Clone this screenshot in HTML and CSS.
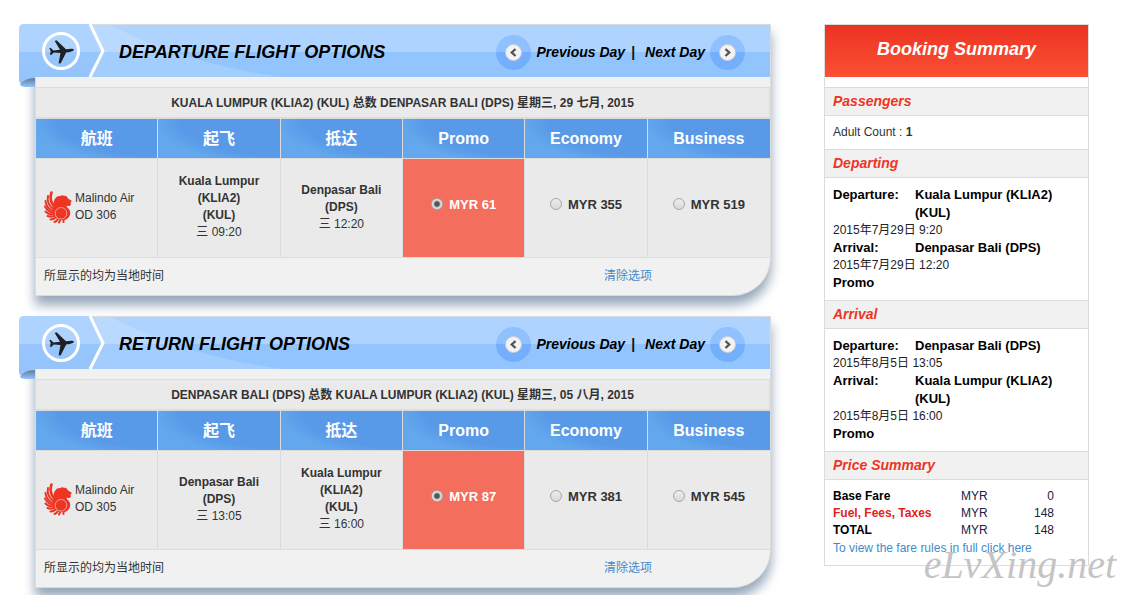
FILE: index.html
```
<!doctype html>
<html lang="zh-CN">
  <head>
    <meta charset="UTF-8" />
    <title>Flight Options</title>
    <link rel="stylesheet" href="styles.css">
  </head>
  <body>
    <!-- shared icons -->
    <svg class="sprite" width="0" height="0" aria-hidden="true">
      <defs>
        <linearGradient id="tab-fill" x1="0" y1="0" x2="0" y2="1">
          <stop offset="0" stop-color="#aed3ff" />
          <stop offset=".44" stop-color="#aed3ff" />
          <stop offset=".44" stop-color="#97c6fd" />
          <stop offset="1" stop-color="#94c4fb" />
        </linearGradient>
        <linearGradient id="fold-fill" x1="0" y1="0" x2="0" y2="1">
          <stop offset="0" stop-color="#5f7a99" />
          <stop offset="1" stop-color="#94c4fb" />
        </linearGradient>
      </defs>
      <symbol id="ribbon" viewBox="0 0 280 63">
        <path d="M72 1H92Q160 38 262 53H72Z" fill="#fff" fill-opacity=".15" />
        <path d="M5 0H71L84 27L71 53H16V63H8Q0 61 0 56V5Q0 0 5 0Z" fill="url(#tab-fill)" />
        <path d="M1 61Q5 54 16 54V63H8Q3 63 1 61Z" fill="url(#fold-fill)" />
        <path d="M71 0L84 27L71 53" fill="none" stroke="#fff" stroke-width="3" />
        <circle cx="42" cy="27" r="17.500" fill="none" stroke="#fff" stroke-width="3" />
        <path d="M55 25.500C54 24.200 50 25 47 25.200L37.500 16.200L35.700 17L41 25.800L34.500 26.600L31.500 23.800L30.400 24.300L31.700 27.300L31 30.700L32.200 30.900L34.800 28.500L41.500 29L39.600 39.300L41.600 39.600L47.200 28.600C50 28 55 27.500 55 25.500Z" fill="#202024" />
      </symbol>
      <symbol id="malindo" viewBox="0 0 28 33">
        <g fill="none" stroke="#ee3524" stroke-width="2" stroke-linecap="round">
          <path d="M7.500 1.500Q4.500 10 11.500 17" stroke-width="2.600" />
          <path d="M4 5Q2 13 10.500 19" />
          <path d="M1.500 10Q2 17 10 20.500" />
          <path d="M1 15.500Q4 21 10 22" />
          <path d="M1.500 20.500Q5 24 10 23.500" />
          <path d="M3.500 25Q7 26.500 10.500 25" />
          <path d="M6.500 28.500Q9.500 28.500 12 26.500" />
          <path d="M10.500 31Q13 30 14 28" />
          <path d="M15 31.500L16.500 28.500" />
          <path d="M19.500 31L19.500 28.500" />
        </g>
        <path d="M10.500 8.500Q13 4.500 16 5.200Q18 3.600 20 4.800Q23 4 24 7.500L28 10L26.500 11.500L27 13.500Q25.500 16 22.500 14.500Q22.500 16.500 25 18Q27.500 22 25 26Q21 31 14.500 28.500Q9 25 10 18.500Q8.500 13 10.500 8.500Z" fill="#ee3524" />
        <circle cx="17" cy="22.300" r="5.800" fill="none" stroke="#ebebeb" stroke-opacity=".7" stroke-width=".8" />
      </symbol>
      <symbol id="arrow" viewBox="0 0 35 35">
        <circle cx="17.500" cy="17.500" r="8" fill="#f2f3f5" stroke="#c9ccd2" />
        <path d="M19.500 14L15.800 17.500L19.500 21" fill="none" stroke="#555" stroke-width="2.400" />
      </symbol>
    </svg>

    <div class="page">
      <main class="flights">
        <section class="panel">
          <header class="panel-header">
            <svg class="ribbon" aria-hidden="true"><use href="#ribbon" /></svg>
            <h2>DEPARTURE FLIGHT OPTIONS</h2>
            <nav class="day-nav">
              <a href="#"><svg class="arrow"><use href="#arrow" /></svg>Previous Day</a>
              <span class="divider">|</span>
              <a href="#">Next Day<svg class="arrow arrow-next"><use href="#arrow" /></svg></a>
            </nav>
          </header>
          <table class="options">
            <caption>KUALA LUMPUR (KLIA2) (KUL) 总数 DENPASAR BALI (DPS) 星期三, 29 七月, 2015</caption>
            <thead>
              <tr>
                <th>航班</th>
                <th>起飞</th>
                <th>抵达</th>
                <th>Promo</th>
                <th>Economy</th>
                <th>Business</th>
              </tr>
            </thead>
            <tbody>
              <tr>
                <td>
                  <div class="airline">
                    <svg class="logo" aria-hidden="true"><use href="#malindo" /></svg>
                    <span>Malindo Air<br>OD 306</span>
                  </div>
                </td>
                <td><b>Kuala Lumpur<br>(KLIA2)<br>(KUL)</b><br>三 09:20</td>
                <td><b>Denpasar Bali<br>(DPS)</b><br>三 12:20</td>
                <td class="selected"><label class="fare"><input type="radio" name="depart" checked>MYR 61</label></td>
                <td><label class="fare"><input type="radio" name="depart">MYR 355</label></td>
                <td><label class="fare"><input type="radio" name="depart">MYR 519</label></td>
              </tr>
            </tbody>
          </table>
          <footer class="panel-footer">
            <span>所显示的均为当地时间</span>
            <a href="#">清除选项</a>
          </footer>
        </section>

        <section class="panel">
          <header class="panel-header">
            <svg class="ribbon" aria-hidden="true"><use href="#ribbon" /></svg>
            <h2>RETURN FLIGHT OPTIONS</h2>
            <nav class="day-nav">
              <a href="#"><svg class="arrow"><use href="#arrow" /></svg>Previous Day</a>
              <span class="divider">|</span>
              <a href="#">Next Day<svg class="arrow arrow-next"><use href="#arrow" /></svg></a>
            </nav>
          </header>
          <table class="options">
            <caption>DENPASAR BALI (DPS) 总数 KUALA LUMPUR (KLIA2) (KUL) 星期三, 05 八月, 2015</caption>
            <thead>
              <tr>
                <th>航班</th>
                <th>起飞</th>
                <th>抵达</th>
                <th>Promo</th>
                <th>Economy</th>
                <th>Business</th>
              </tr>
            </thead>
            <tbody>
              <tr>
                <td>
                  <div class="airline">
                    <svg class="logo" aria-hidden="true"><use href="#malindo" /></svg>
                    <span>Malindo Air<br>OD 305</span>
                  </div>
                </td>
                <td><b>Denpasar Bali<br>(DPS)</b><br>三 13:05</td>
                <td><b>Kuala Lumpur<br>(KLIA2)<br>(KUL)</b><br>三 16:00</td>
                <td class="selected"><label class="fare"><input type="radio" name="return" checked>MYR 87</label></td>
                <td><label class="fare"><input type="radio" name="return">MYR 381</label></td>
                <td><label class="fare"><input type="radio" name="return">MYR 545</label></td>
              </tr>
            </tbody>
          </table>
          <footer class="panel-footer">
            <span>所显示的均为当地时间</span>
            <a href="#">清除选项</a>
          </footer>
        </section>
      </main>

      <aside class="summary">
        <h2>Booking Summary</h2>
        <h3>Passengers</h3>
        <div class="summary-body passengers">Adult Count : <b>1</b></div>

        <h3>Departing</h3>
        <div class="summary-body">
          <div class="stop"><b>Departure:</b><b>Kuala Lumpur (KLIA2) (KUL)</b></div>
          <div class="date">2015年7月29日 9:20</div>
          <div class="stop"><b>Arrival:</b><b>Denpasar Bali (DPS)</b></div>
          <div class="date">2015年7月29日 12:20</div>
          <div class="stop"><b>Promo</b></div>
        </div>

        <h3>Arrival</h3>
        <div class="summary-body">
          <div class="stop"><b>Departure:</b><b>Denpasar Bali (DPS)</b></div>
          <div class="date">2015年8月5日 13:05</div>
          <div class="stop"><b>Arrival:</b><b>Kuala Lumpur (KLIA2) (KUL)</b></div>
          <div class="date">2015年8月5日 16:00</div>
          <div class="stop"><b>Promo</b></div>
        </div>

        <h3>Price Summary</h3>
        <div class="summary-body">
          <table class="prices">
            <tr><th>Base Fare</th><td>MYR</td><td class="amount">0</td></tr>
            <tr class="fees"><th>Fuel, Fees, Taxes</th><td>MYR</td><td class="amount">148</td></tr>
            <tr><th>TOTAL</th><td>MYR</td><td class="amount">148</td></tr>
          </table>
          <a class="rules" href="#">To view the fare rules in full click here</a>
        </div>
        <div class="watermark">eLvXing.net</div>
      </aside>
    </div>
  </body>
</html>
```

FILE: styles.css
```
* {
  box-sizing: border-box;
}
body {
  margin: 0;
  background: #fff;
  color: #333;
  font-family: "Liberation Sans", Arial, "Noto Sans CJK SC", sans-serif;
  font-size: 12px;
  line-height: 17px;
}
h2,
h3 {
  margin: 0;
  font-style: italic;
}
a {
  color: #428bca;
  text-decoration: none;
}
.sprite {
  position: absolute;
}
.page {
  display: flex;
  align-items: flex-start;
  gap: 53px;
  min-height: 100vh;
  padding: 24px 37px 0 19px;
  overflow: hidden;
}

/* flight panels */
.flights {
  flex: 1;
  display: flex;
  flex-direction: column;
  gap: 20px;
  padding-left: 16px;
}
.panel {
  background: #f1f1f1;
  border: 1px solid #d9dbdd;
  border-radius: 0 0 38px 0;
  box-shadow: 0 9px 12px #94a6b9;
}
.panel-header {
  position: relative;
  display: flex;
  align-items: center;
  justify-content: space-between;
  height: 52px;
  margin-bottom: 10px;
  padding: 2px 25px 0 83px;
  background: linear-gradient(#aed3ff 27px, #92c5fd 27px);
}
.panel-header h2 {
  position: relative;
  color: #000;
  font-size: 18px;
}
.ribbon {
  position: absolute;
  left: -17px;
  top: -1px;
  width: 280px;
  height: 63px;
}
.day-nav {
  display: flex;
  align-items: center;
  gap: 6px;
  font-size: 14px;
  font-weight: bold;
}
.day-nav a {
  display: flex;
  align-items: center;
  gap: 5px;
  color: #000;
  font-style: italic;
}
.divider {
  margin-right: 4px;
  color: #111;
}
.arrow {
  width: 35px;
  height: 35px;
  border-radius: 50%;
  background: linear-gradient(#8fc0ff 17px, #74affd 17px);
}
.arrow-next use {
  transform: scaleX(-1);
  transform-origin: center;
}
.options {
  width: 100%;
  table-layout: fixed;
  border-collapse: separate;
  border-spacing: 0;
  text-align: center;
}
.options caption {
  padding: 7px 0 5px;
  background: #eaeaea;
  border: 1px solid #dcdcdc;
  border-bottom-width: 2px;
  border-left: none;
  font-weight: bold;
}
.options th {
  height: 39px;
  padding: 0;
  background: radial-gradient(ellipse 90% 103% at 100% 0, #5899e8 90%, #63a8ec 115%);
  border-right: 1px solid #dcdcdc;
  color: #fff;
  font-size: 16px;
}
.options td {
  height: 100px;
  padding: 7px 8px 9px;
  background: #eaeaea;
  border: 1px solid #dcdcdc;
  border-left: none;
}
.options th:last-child,
.options td:last-child {
  border-right: none;
}
.options td.selected {
  background: #f36e5c;
  color: #fff;
}
.airline {
  display: flex;
  align-items: center;
  gap: 3px;
  text-align: left;
}
.logo {
  width: 28px;
  height: 33px;
}
.fare {
  display: flex;
  align-items: center;
  justify-content: center;
  gap: 6px;
  margin-top: -6px;
  font-size: 13px;
  font-weight: bold;
}
.fare input {
  appearance: none;
  width: 12px;
  height: 12px;
  margin: 0;
  border: 1px solid #a6a6a6;
  border-radius: 50%;
  background: linear-gradient(#ededed, #d9d9d9);
}
.fare input:checked {
  background: radial-gradient(circle, #555 2px, #e4e4e4 4px);
}
.panel-footer {
  display: grid;
  grid-template-columns: 560px auto;
  padding: 10px 8px;
}

/* booking summary */
.summary {
  position: relative;
  width: 265px;
  border: 1px solid #dcdcdc;
}
.summary h2 {
  height: 52px;
  margin-bottom: 10px;
  background: linear-gradient(#ec3323, #fb5033);
  color: #fff;
  font-size: 18px;
  line-height: 48px;
  text-align: center;
}
.summary h3 {
  padding: 0 8px;
  background: #f1f1f1;
  border: solid #dcdcdc;
  border-width: 1px 0;
  color: #ee3524;
  font-size: 14px;
  line-height: 27px;
}
.summary-body {
  padding: 8px;
  color: #000;
}
.passengers {
  color: #333;
}
.stop {
  display: grid;
  grid-template-columns: 82px 1fr;
  padding-right: 20px;
  font-size: 13px;
  line-height: 18px;
}
.date {
  color: #222;
}
.prices {
  width: 221px;
  border-spacing: 0;
}
.prices th,
.prices td {
  padding: 0;
  line-height: 17px;
  text-align: left;
}
.prices th {
  width: 128px;
}
.prices td {
  color: #202040;
}
.prices .amount {
  text-align: right;
}
.fees th {
  color: #e2231a;
}
.rules {
  display: block;
  line-height: 18px;
}
.watermark {
  position: absolute;
  right: -28px;
  bottom: -20px;
  color: #c4c4c4;
  font-family: "Liberation Serif", serif;
  font-size: 40px;
  font-style: italic;
  line-height: 40px;
  pointer-events: none;
}
```
